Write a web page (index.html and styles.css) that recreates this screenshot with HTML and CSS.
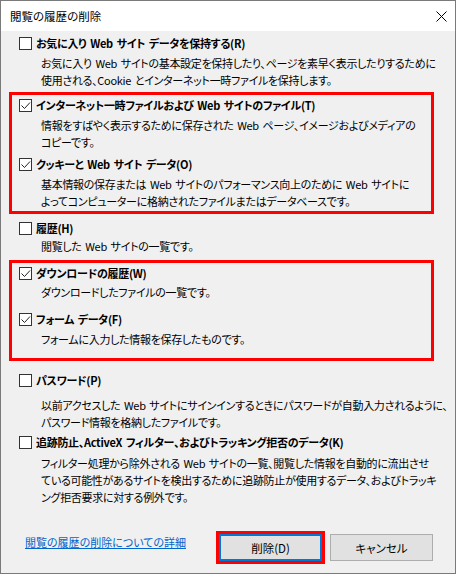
FILE: index.html
```html
<!DOCTYPE html>
<html lang="ja">
<head>
<meta charset="utf-8">
<title>閲覧の履歴の削除</title>
<link rel="stylesheet" href="styles.css">
</head>
<body>
<div class="window">
  <div class="titlebar">
    <span class="title">閲覧の履歴の削除</span>
    <svg class="close" width="11" height="11" viewBox="0 0 11 11"><path d="M0.5 0.5 L10.5 10.5 M10.5 0.5 L0.5 10.5" stroke="#000" stroke-width="1" fill="none"/></svg>
  </div>
  <div class="content">
    <div class="item item-favorites">
      <div class="row"><span class="cb"></span><span class="label">お気に入り Web サイト データを保持する(R)</span></div>
      <div class="desc">お気に入り Web サイトの基本設定を保持したり、ページを素早く表示したりするために<br>使用される、Cookie とインターネット一時ファイルを保持します。</div>
    </div>
    <div class="box box-first">
      <div class="item item-cache">
        <div class="row"><span class="cb"><svg width="11" height="11" viewBox="0 0 11 11"><path d="M1.5 5.5 L4.5 8.5 L10 2.5" stroke="#222" stroke-width="1" fill="none"/></svg></span><span class="label">インターネット一時ファイルおよび Web サイトのファイル(T)</span></div>
        <div class="desc">情報をすばやく表示するために保存された Web ページ、イメージおよびメディアの<br>コピーです。</div>
      </div>
      <div class="item item-cookies">
        <div class="row"><span class="cb"><svg width="11" height="11" viewBox="0 0 11 11"><path d="M1.5 5.5 L4.5 8.5 L10 2.5" stroke="#222" stroke-width="1" fill="none"/></svg></span><span class="label">クッキーと Web サイト データ(O)</span></div>
        <div class="desc">基本情報の保存または Web サイトのパフォーマンス向上のために Web サイトに<br>よってコンピューターに格納されたファイルまたはデータベースです。</div>
      </div>
    </div>
    <div class="item item-history">
      <div class="row"><span class="cb"></span><span class="label">履歴(H)</span></div>
      <div class="desc">閲覧した Web サイトの一覧です。</div>
    </div>
    <div class="box box-second">
      <div class="item item-downloads">
        <div class="row"><span class="cb"><svg width="11" height="11" viewBox="0 0 11 11"><path d="M1.5 5.5 L4.5 8.5 L10 2.5" stroke="#222" stroke-width="1" fill="none"/></svg></span><span class="label">ダウンロードの履歴(W)</span></div>
        <div class="desc">ダウンロードしたファイルの一覧です。</div>
      </div>
      <div class="item item-forms">
        <div class="row"><span class="cb"><svg width="11" height="11" viewBox="0 0 11 11"><path d="M1.5 5.5 L4.5 8.5 L10 2.5" stroke="#222" stroke-width="1" fill="none"/></svg></span><span class="label">フォーム データ(F)</span></div>
        <div class="desc">フォームに入力した情報を保存したものです。</div>
      </div>
    </div>
    <div class="item item-passwords">
      <div class="row"><span class="cb"></span><span class="label">パスワード(P)</span></div>
      <div class="desc">以前アクセスした Web サイトにサインインするときにパスワードが自動入力されるように、<br>パスワード情報を格納したファイルです。</div>
    </div>
    <div class="item item-tracking">
      <div class="row"><span class="cb"></span><span class="label">追跡防止、ActiveX フィルター、およびトラッキング拒否のデータ(K)</span></div>
      <div class="desc">フィルター処理から除外される Web サイトの一覧、閲覧した情報を自動的に流出させ<br>ている可能性があるサイトを検出するために追跡防止が使用するデータ、およびトラッキ<br>ング拒否要求に対する例外です。</div>
    </div>
  </div>
  <div class="footer">
    <a class="link" href="#">閲覧の履歴の削除についての詳細</a>
    <div class="highlight"><button class="btn btn-default">削除(D)</button></div>
    <button class="btn">キャンセル</button>
  </div>
</div>
</body>
</html>
```
FILE: styles.css
```css
* { box-sizing: border-box; }
html, body { margin: 0; padding: 0; background: #fff; }
body {
  font-family: "Noto Sans CJK JP", "Noto Sans", sans-serif;
  font-size: 11px;
  letter-spacing: -0.3px;
  word-spacing: 1.5px;
  color: #000;
  font-feature-settings: "palt";
}
.window {
  width: 456px;
  height: 574px;
  border: 1px solid #7a7a7a;
  background: #f0f0f0;
  display: flex;
  flex-direction: column;
}
.titlebar {
  height: 30px;
  flex: none;
  background: #fff;
  display: flex;
  align-items: center;
  justify-content: space-between;
  padding: 0 8px 0 9px;
}
.title { font-size: 11.5px; letter-spacing: 0; line-height: 17px; }
.close { display: block; }

.content { padding-left: 8px; }
.item { padding-left: 10px; }
.box .item { padding-left: 7px; }
.row { display: flex; align-items: center; height: 17px; }
.cb {
  width: 13px; height: 13px; flex: none;
  border: 1px solid #333;
  background: #fff;
  margin-right: 4px;
  display: flex;
}
.cb svg { display: block; }
.label { font-weight: 700; white-space: nowrap; line-height: 17px; }
.desc { margin-left: 22px; line-height: 17px; white-space: nowrap; }

.box { width: 425px; border: 3px solid #ff0000; }
.box-first { margin-top: 3px; padding: 2px 0 1px; }
.box-second { margin-top: 5px; padding: 2px 0 10px; }

.item-favorites { margin-top: 4px; }
.item-favorites .desc { margin-top: 3px; }
.item-cache .desc { margin-top: 3px; }
.item-cookies { margin-top: 5px; }
.item-cookies .desc { margin-top: 3px; }
.item-history { margin-top: 6px; }
.item-history .desc { margin-top: 1px; }
.item-downloads .desc { margin-top: 2px; }
.item-forms { margin-top: 10px; }
.item-forms .desc { margin-top: 3px; }
.item-passwords { margin-top: 11px; }
.item-passwords .desc { margin-top: 8px; }
.item-tracking { margin-top: 3px; }
.item-tracking .desc { margin-top: 4px; }

.footer {
  margin-top: 25px;
  display: flex;
  align-items: flex-start;
  padding: 0 22px 0 24px;
}
.link {
  color: #0066cc;
  text-decoration: underline;
  letter-spacing: 0;
  line-height: 17px;
  margin-top: 3px;
  white-space: nowrap;
}
.highlight {
  margin-left: auto;
  border: 3px solid #ff0000;
  margin-right: 5px;
}
.btn {
  width: 103px;
  height: 27px;
  font-family: inherit;
  font-size: 11.5px;
  letter-spacing: 0;
  font-feature-settings: "palt";
  color: #000;
  background: #e1e1e1;
  border: 1px solid #adadad;
  padding: 0;
  margin: 0;
  display: block;
}
.btn-default { border: 2px solid #0078d7; }
.footer > .btn { margin-top: 3px; }
```
